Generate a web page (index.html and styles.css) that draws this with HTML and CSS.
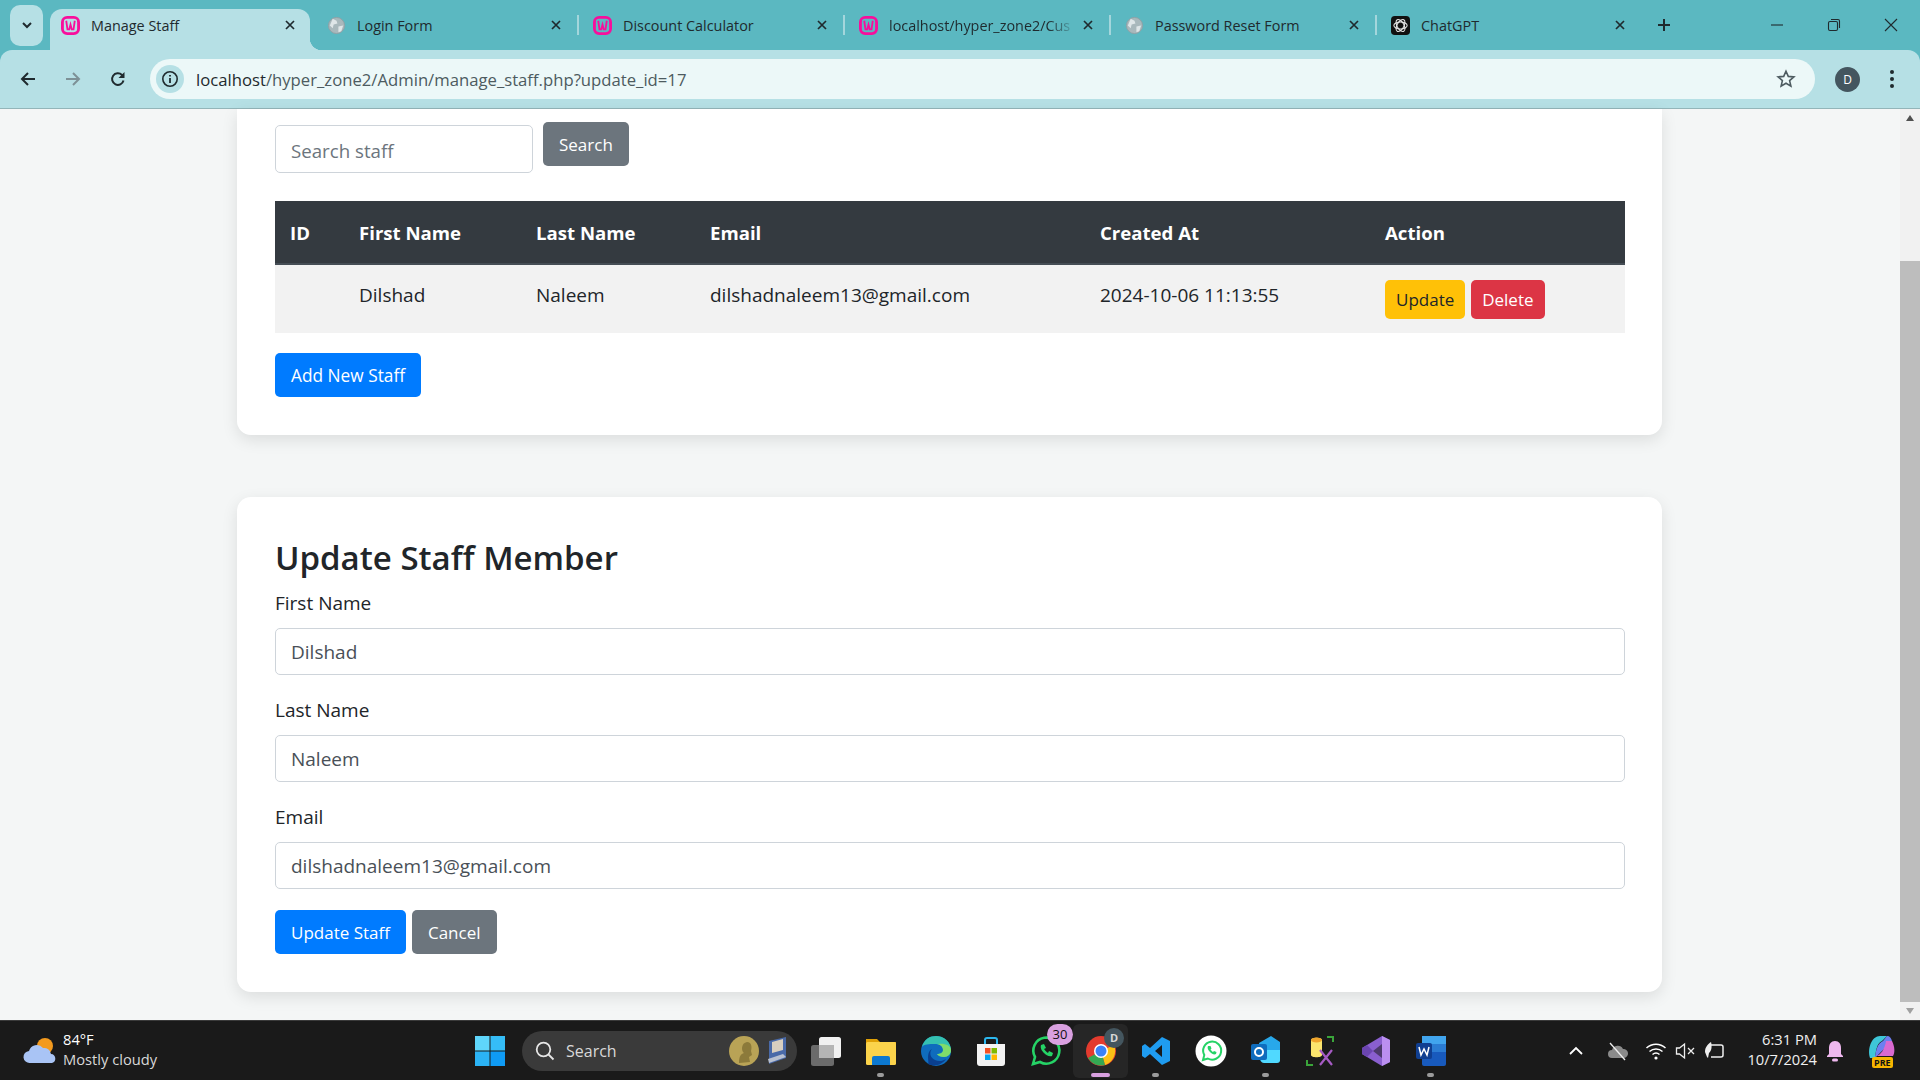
FILE: index.html
```html
<!DOCTYPE html>
<html lang="en">
<head>
    <meta charset="UTF-8">
    <title>Manage Staff</title>
    <link rel="stylesheet" href="styles.css">
</head>
<body>

<svg class="defs" width="0" height="0">
    <symbol id="wamp" viewBox="0 0 20 20">
        <rect x="1.500" y="1.500" width="17" height="17" rx="5" fill="none" stroke="#f80e9c" stroke-width="3"/>
        <path d="M5.500 5l1.300 9h1.900l1.300-5 1.300 5h1.900l1.300-9" fill="none" stroke="#f80e9c" stroke-width="1.900"/>
    </symbol>
    <symbol id="globe" viewBox="0 0 20 20">
        <circle cx="10" cy="10" r="8.500" fill="#a9b8bc" stroke="#8fa0a5"/>
        <path d="M6 3l4 2 1 3-4 1-1 4-3-3zM12 11l5-1-2 6-3 1z" fill="#dfe6e8"/>
    </symbol>
    <symbol id="close" viewBox="0 0 12 12">
        <path d="M2 2l8 8M10 2l-8 8" fill="none" stroke="#1f2a2e" stroke-width="1.700"/>
    </symbol>
</svg>

<div class="browser">
    <!-- Browser tabs -->
    <div class="tabstrip">
        <div class="tab-menu">
            <svg width="14" height="14" viewBox="0 0 14 14"><path d="M3 5l4 4 4-4" fill="none" stroke="#1f2a2e" stroke-width="2"/></svg>
        </div>
        <div class="tab active">
            <svg class="favicon"><use href="#wamp"/></svg>
            <span class="tab-title">Manage Staff</span>
            <svg class="tab-close"><use href="#close"/></svg>
        </div>
        <div class="tab">
            <svg class="favicon"><use href="#globe"/></svg>
            <span class="tab-title">Login Form</span>
            <svg class="tab-close"><use href="#close"/></svg>
        </div>
        <div class="tab">
            <svg class="favicon"><use href="#wamp"/></svg>
            <span class="tab-title">Discount Calculator</span>
            <svg class="tab-close"><use href="#close"/></svg>
        </div>
        <div class="tab">
            <svg class="favicon"><use href="#wamp"/></svg>
            <span class="tab-title fade">localhost/hyper_zone2/Cus</span>
            <svg class="tab-close"><use href="#close"/></svg>
        </div>
        <div class="tab">
            <svg class="favicon"><use href="#globe"/></svg>
            <span class="tab-title">Password Reset Form</span>
            <svg class="tab-close"><use href="#close"/></svg>
        </div>
        <div class="tab">
            <svg class="favicon" viewBox="0 0 20 20">
                <rect width="20" height="20" rx="4" fill="#111"/>
                <g fill="none" stroke="#e8e8e8" stroke-width="1.100">
                    <ellipse cx="10" cy="10" rx="7" ry="3.600"/>
                    <ellipse cx="10" cy="10" rx="7" ry="3.600" transform="rotate(60 10 10)"/>
                    <ellipse cx="10" cy="10" rx="7" ry="3.600" transform="rotate(120 10 10)"/>
                </g>
            </svg>
            <span class="tab-title">ChatGPT</span>
            <svg class="tab-close"><use href="#close"/></svg>
        </div>
        <svg class="new-tab" width="16" height="16" viewBox="0 0 16 16"><path d="M8 2v12M2 8h12" stroke="#1f2a2e" stroke-width="2"/></svg>
        <div class="window-controls">
            <svg width="16" height="16" viewBox="0 0 16 16"><path d="M2 8h12" stroke="#1f2a2e" stroke-width="1.100"/></svg>
            <svg width="16" height="16" viewBox="0 0 16 16"><rect x="2.500" y="4.500" width="9" height="9" rx="1.500" fill="none" stroke="#1f2a2e" stroke-width="1.100"/><path d="M5 2.500h7a1.500 1.500 0 0 1 1.500 1.500v7" fill="none" stroke="#1f2a2e" stroke-width="1.100"/></svg>
            <svg width="16" height="16" viewBox="0 0 16 16"><path d="M2 2l12 12M14 2L2 14" stroke="#1f2a2e" stroke-width="1.100"/></svg>
        </div>
    </div>

    <!-- Address bar -->
    <div class="toolbar">
        <svg class="nav-icon" viewBox="0 0 18 18"><path d="M16 9H3M9 3L3 9l6 6" fill="none" stroke="#1f2a2e" stroke-width="2"/></svg>
        <svg class="nav-icon" viewBox="0 0 18 18"><path d="M2 9h13M9 3l6 6-6 6" fill="none" stroke="#7d9196" stroke-width="2"/></svg>
        <svg class="nav-icon" viewBox="0 0 18 18"><path d="M14.500 10.500A5.800 5.800 0 1 1 13 5l1.500 1.500" fill="none" stroke="#1f2a2e" stroke-width="2"/><path d="M15.500 2v6h-6z" fill="#1f2a2e"/></svg>
        <div class="omnibox">
            <div class="site-info">
                <svg width="18" height="18" viewBox="0 0 18 18"><circle cx="9" cy="9" r="7.200" fill="none" stroke="#1f2a2e" stroke-width="1.600"/><path d="M9 8v5M9 5v1.600" stroke="#1f2a2e" stroke-width="1.800"/></svg>
            </div>
            <span class="url"><span class="url-host">localhost</span>/hyper_zone2/Admin/manage_staff.php?update_id=17</span>
            <svg class="star" width="20" height="20" viewBox="0 0 20 20"><path d="M10 2.200l2.300 5.200 5.600.5-4.300 3.700 1.300 5.500L10 14.200l-4.900 2.900 1.300-5.500-4.300-3.700 5.600-.5z" fill="none" stroke="#4d5b60" stroke-width="1.600"/></svg>
        </div>
        <div class="avatar">D</div>
        <svg class="kebab" width="6" height="20" viewBox="0 0 6 20"><circle cx="3" cy="3" r="2"/><circle cx="3" cy="10" r="2"/><circle cx="3" cy="17" r="2"/></svg>
    </div>
</div>

<div class="viewport">
    <main class="page">
        <section class="card staff-list">
            <form class="search-form">
                <input class="field search-field" type="text" placeholder="Search staff">
                <button class="btn btn-gray" type="button">Search</button>
            </form>

            <table class="staff-table">
                <colgroup>
                    <col class="col-id"><col class="col-first"><col class="col-last"><col class="col-email"><col class="col-created"><col>
                </colgroup>
                <thead>
                    <tr>
                        <th>ID</th>
                        <th>First Name</th>
                        <th>Last Name</th>
                        <th>Email</th>
                        <th>Created At</th>
                        <th>Action</th>
                    </tr>
                </thead>
                <tbody>
                    <tr>
                        <td></td>
                        <td>Dilshad</td>
                        <td>Naleem</td>
                        <td>dilshadnaleem13@gmail.com</td>
                        <td>2024-10-06 11:13:55</td>
                        <td class="actions">
                            <button class="btn btn-small btn-yellow" type="button">Update</button>
                            <button class="btn btn-small btn-red" type="button">Delete</button>
                        </td>
                    </tr>
                </tbody>
            </table>

            <button class="btn btn-blue add-btn" type="button">Add New Staff</button>
        </section>

        <section class="card staff-form">
            <h2>Update Staff Member</h2>
            <div class="form-group">
                <label>First Name</label>
                <input class="field" type="text" value="Dilshad">
            </div>
            <div class="form-group">
                <label>Last Name</label>
                <input class="field" type="text" value="Naleem">
            </div>
            <div class="form-group">
                <label>Email</label>
                <input class="field" type="text" value="dilshadnaleem13@gmail.com">
            </div>
            <div class="form-buttons">
                <button class="btn btn-blue" type="button">Update Staff</button>
                <button class="btn btn-gray" type="button">Cancel</button>
            </div>
        </section>
    </main>

    <div class="scrollbar">
        <div class="scroll-arrow"><svg width="10" height="8" viewBox="0 0 10 8"><path d="M5 1l4 6H1z" fill="#505050"/></svg></div>
        <div class="scroll-gap"></div>
        <div class="scroll-thumb"></div>
        <div class="scroll-arrow"><svg width="10" height="8" viewBox="0 0 10 8"><path d="M5 7L1 1h8z" fill="#a0a0a0"/></svg></div>
    </div>
</div>

<!-- Windows taskbar -->
<footer class="taskbar">
    <div class="weather">
        <svg width="36" height="32" viewBox="0 0 36 32">
            <circle cx="23" cy="11" r="8" fill="#f39a1e"/>
            <path d="M8 28a6 6 0 0 1-1-12 8 8 0 0 1 14-3 7 7 0 0 1 8 6 4.600 4.600 0 0 1 1 9z" fill="#a9c4f5"/>
        </svg>
        <div class="weather-text">
            <div class="temp">84°F</div>
            <div>Mostly cloudy</div>
        </div>
    </div>

    <div class="task-icons">
        <div class="task-icon">
            <svg width="30" height="30" viewBox="0 0 30 30">
                <rect x="0" y="0" width="14.500" height="14.500" fill="#5fd6fb"/>
                <rect x="15.500" y="0" width="14.500" height="14.500" fill="#35bdf7"/>
                <rect x="0" y="15.500" width="14.500" height="14.500" fill="#2bb3f5"/>
                <rect x="15.500" y="15.500" width="14.500" height="14.500" fill="#0f9bf5"/>
            </svg>
        </div>
        <div class="task-search">
            <svg width="22" height="22" viewBox="0 0 22 22"><circle cx="9.500" cy="9.500" r="6.800" fill="none" stroke="#e6e6e6" stroke-width="1.800"/><path d="M14.500 14.500l5 5" stroke="#e6e6e6" stroke-width="1.800"/></svg>
            <span class="task-search-label">Search</span>
            <svg class="medal" width="62" height="38" viewBox="0 0 62 38">
                <circle cx="17" cy="19" r="15" fill="#b9a356"/>
                <path d="M12 31c0-7 2-9 5-10-3-2-3-10 3-11 5 0 5 6 4 9l1 4-3 2 1 5z" fill="#8c7a3a"/>
                <path d="M42 9l17-4v21l-17 6z" fill="#4a6aa8"/>
                <path d="M45 10l11-3v11l-11 3z" fill="#d9cfc0"/>
                <path d="M41 27l15-5 3 3-17 6z" fill="#b8c0d0"/>
            </svg>
        </div>
        <div class="task-icon">
            <svg width="30" height="30" viewBox="0 0 30 30">
                <rect x="0" y="9" width="23" height="21" rx="2.500" fill="#6b6b6b"/>
                <rect x="8" y="1" width="22" height="21" rx="2.500" fill="#f1f1f1"/>
                <rect x="8" y="9" width="15" height="13" fill="#b5b5b5"/>
            </svg>
        </div>
        <div class="task-icon running">
            <svg width="32" height="30" viewBox="0 0 32 30">
                <path d="M1 3h11l3 3h16v8H1z" fill="#e0a106"/>
                <rect x="1" y="6" width="30" height="23" rx="1.500" fill="#fbd34b"/>
                <path d="M7 29v-7a2 2 0 0 1 2-2h14a2 2 0 0 1 2 2v7z" fill="#0c78d0"/>
            </svg>
        </div>
        <div class="task-icon">
            <svg width="32" height="32" viewBox="0 0 32 32">
                <circle cx="16" cy="16" r="15" fill="#0f6cbd"/>
                <path d="M2 12C4 4 10 1 16 1c8 0 15 6 15 14 0 4-3 7-7 7-3 0-6-1-7-3 3 0 6-1 6-4 0-4-4-6-8-6-6 0-11 0-13 3z" fill="#35c1b1"/>
                <path d="M31 15c0 4-3 7-7 7-3 0-6-1-7-3 3 0 6-1 6-4 0-3-2-5-5-6 6-1 13 1 13 6z" fill="#7fdc6a"/>
                <path d="M12 14c-3 3-2 9 3 11 4 2 8 1 11-1-4 6-12 8-18 5 2 0-3-11 4-15z" fill="#0a3f8f"/>
            </svg>
        </div>
        <div class="task-icon">
            <svg width="30" height="32" viewBox="0 0 30 32">
                <path d="M9 9V5a2 2 0 0 1 2-2h8a2 2 0 0 1 2 2v4" fill="none" stroke="#2cb7ee" stroke-width="2"/>
                <path d="M1 9h28v19a3 3 0 0 1-3 3H4a3 3 0 0 1-3-3z" fill="#f3f3f3"/>
                <rect x="9" y="13" width="5.500" height="5.500" fill="#f25022"/>
                <rect x="15.500" y="13" width="5.500" height="5.500" fill="#7fba00"/>
                <rect x="9" y="19.500" width="5.500" height="5.500" fill="#00a4ef"/>
                <rect x="15.500" y="19.500" width="5.500" height="5.500" fill="#ffb900"/>
            </svg>
        </div>
        <div class="task-icon">
            <svg width="32" height="32" viewBox="0 0 32 32">
                <path d="M3 29l2-7a13 13 0 1 1 5 5z" fill="none" stroke="#25d366" stroke-width="2.600"/>
                <path d="M11 10c-1 3 1 6 3 8s5 4 8 3l1-3-4-2-1 2c-2-1-3-3-4-4l2-1-2-4z" fill="#25d366"/>
            </svg>
            <span class="badge">30</span>
        </div>
        <div class="task-icon current">
            <svg width="30" height="30" viewBox="0 0 30 30">
                <circle cx="15" cy="15" r="15" fill="#e33b2e"/>
                <path d="M15 15l13-6a15 15 0 0 1-9 20z" fill="#fbc116"/>
                <path d="M15 15l4 14A15 15 0 0 1 2 22z" fill="#34a853"/>
                <circle cx="15" cy="15" r="7" fill="#fff"/>
                <circle cx="15" cy="15" r="5.500" fill="#3b82f6"/>
            </svg>
            <span class="chrome-badge">D</span>
        </div>
        <div class="task-icon running">
            <svg width="30" height="30" viewBox="0 0 30 30">
                <path d="M21 1l8 4v20l-8 4-12-11-5 4-3-2v-10l3-2 5 4zM21 9l-7 6 7 6z" fill="#1f9cf0"/>
            </svg>
        </div>
        <div class="task-icon">
            <svg width="32" height="32" viewBox="0 0 32 32">
                <circle cx="16" cy="16" r="15.500" fill="#fff"/>
                <path d="M8 25l1.300-5a9 9 0 1 1 3.500 3.500z" fill="none" stroke="#25d366" stroke-width="2"/>
                <path d="M13 11c-1 2 0 4 2 6s4 3 6 2l.5-2-2.500-1-1 1c-1-.5-2-2-2.500-2.500l1-1-1-2.500z" fill="#25d366"/>
            </svg>
        </div>
        <div class="task-icon running">
            <svg width="30" height="32" viewBox="0 0 30 32">
                <path d="M8 8l12-7 9 6v17a3 3 0 0 1-3 3H12a3 3 0 0 1-3-3z" fill="#28a8ea"/>
                <path d="M10 15h19v10a3 3 0 0 1-3 3H13a3 3 0 0 1-3-3z" fill="#50d9ff"/>
                <rect x="0" y="9" width="16" height="16" rx="2" fill="#0f6cbd"/>
                <circle cx="8" cy="17" r="4" fill="none" stroke="#fff" stroke-width="2"/>
            </svg>
        </div>
        <div class="task-icon">
            <svg width="30" height="32" viewBox="0 0 30 32">
                <path d="M5 5c0-3 11-3 11 0v15c0 3-11 3-11 0z" fill="#fbe56d"/>
                <ellipse cx="10.500" cy="5" rx="5.500" ry="2.500" fill="#f0a52c"/>
                <path d="M21 2h6v5M1 25v5h6" fill="none" stroke="#3aa53a" stroke-width="2"/>
                <path d="M14 30l12-15M26 30L14 15" stroke="#a65bc4" stroke-width="2.200"/>
            </svg>
        </div>
        <div class="task-icon">
            <svg width="28" height="32" viewBox="0 0 28 32">
                <path d="M20 1l8 4v22l-8 4-20-12v-6z" fill="#8a5fcf"/>
                <path d="M20 1l8 4v22l-8 4z" fill="#bb8ff0"/>
                <path d="M20 9l-9 7 9 7z" fill="#1b1b1b" opacity=".55"/>
                <path d="M0 13l5-3 6 6-6 6-5-3z" fill="#6b45b0"/>
            </svg>
        </div>
        <div class="task-icon running">
            <svg width="30" height="32" viewBox="0 0 30 32">
                <rect x="6" y="1" width="24" height="30" rx="2" fill="#185abd"/>
                <rect x="6" y="1" width="24" height="8" fill="#41a5ee"/>
                <rect x="6" y="9" width="24" height="8" fill="#2b7cd3"/>
                <rect x="0" y="8" width="16" height="16" rx="2" fill="#103f91"/>
                <path d="M3 12l2 8 3-6 3 6 2-8" fill="none" stroke="#fff" stroke-width="1.500"/>
            </svg>
        </div>
    </div>

    <div class="tray">
        <svg class="tray-chevron" width="16" height="16" viewBox="0 0 16 16"><path d="M2 11l6-6 6 6" fill="none" stroke="#fff" stroke-width="1.800"/></svg>
        <svg class="tray-cloud" width="22" height="20" viewBox="0 0 22 20"><path d="M5 17a4 4 0 0 1 0-8 6 6 0 0 1 11-1 4.500 4.500 0 0 1 1 9z" fill="#8b8b8b"/><path d="M3 2l15 17" stroke="#eee" stroke-width="1.300"/></svg>
        <svg class="tray-wifi" width="22" height="20" viewBox="0 0 22 20"><path d="M1.500 7a14 14 0 0 1 19 0M4.500 10.500a10 10 0 0 1 13 0M7.500 13.500a5.500 5.500 0 0 1 7 0" fill="none" stroke="#fff" stroke-width="1.500"/><circle cx="11" cy="17" r="1.600" fill="#fff"/></svg>
        <svg class="tray-sound" width="22" height="20" viewBox="0 0 22 20"><path d="M1.500 7v6h3l5 4V3l-5 4z" fill="none" stroke="#eee" stroke-width="1.300"/><path d="M13 7l6 6M19 7l-6 6" stroke="#eee" stroke-width="1.300"/></svg>
        <svg class="tray-battery" width="24" height="22" viewBox="0 0 24 22"><path d="M8 5h10a2 2 0 0 1 2 2v8a2 2 0 0 1-2 2H8" fill="none" stroke="#eee" stroke-width="1.500"/><path d="M2 12c0-5 3-8 6-10 1 3 1 9-2 11l-1 5-1-1z" fill="#eee"/></svg>
        <div class="clock">
            <div>6:31 PM</div>
            <div>10/7/2024</div>
        </div>
        <svg class="tray-bell" width="20" height="24" viewBox="0 0 20 24"><path d="M10 2c-4 0-6 3-6 7v6l-2 2v1h16v-1l-2-2V9c0-4-2-7-6-7z" fill="#efb8ef"/><rect x="7" y="19.500" width="6" height="3" rx="1.500" fill="#efb8ef"/></svg>
        <div class="copilot">
            <svg width="30" height="26" viewBox="0 0 30 26">
                <path d="M3 24C0 14 5 2 13 2h7l-5 5C9 10 9 18 8 24z" fill="#3ec6d8"/>
                <path d="M8 24c1-8 2-14 8-17l4-5c3 0 4 2 5 5z" fill="#6d7ff0"/>
                <path d="M25 7c3 6 3 12 1 15H8c6 0 10-8 11-15z" fill="#d96ad0"/>
            </svg>
            <span class="pre">PRE</span>
        </div>
    </div>
</footer>

</body>
</html>
```

FILE: styles.css
```css
* {
    margin: 0;
    padding: 0;
    box-sizing: border-box;
}
body {
    display: flex;
    flex-direction: column;
    height: 100vh;
    overflow: hidden;
    font-family: "Open Sans", "Noto Sans", sans-serif;
    font-size: 19px;
    color: #212529;
    background: #f4f6f6;
}
.defs {
    position: absolute;
}
.browser {
    flex: none;
    background: #5bb8c1;
}

/* Tabs */
.tabstrip {
    display: flex;
    align-items: center;
    height: 50px;
    padding-left: 10px;
    font-size: 14.4px;
    color: #1f2a2e;
}
.tab-menu {
    display: flex;
    align-items: center;
    justify-content: center;
    width: 33px;
    height: 41px;
    margin-right: 7px;
    border-radius: 10px;
    background: #b6e0e5;
}
.tab {
    display: flex;
    align-items: center;
    width: 266px;
    height: 50px;
    padding: 0 14px 0 17px;
    position: relative;
}
.tab + .tab::before {
    content: "";
    position: absolute;
    left: 1px;
    top: 15px;
    width: 2px;
    height: 20px;
    background: #a4d6dc;
}
.tab.active {
    width: 260px;
    height: 41px;
    margin-top: 9px;
    padding: 0 14px 9px 11px;
    background: #b6e0e5;
    border-radius: 12px 12px 0 0;
}
/* curved foot of the active tab */
.tab.active::after {
    content: "";
    position: absolute;
    right: -12px;
    bottom: 0;
    width: 12px;
    height: 12px;
    background: radial-gradient(circle at 100% 0, transparent 12px, #b6e0e5 12.5px);
}
.tab.active + .tab::before {
    display: none;
}
.favicon {
    flex: none;
    width: 19px;
    height: 19px;
    margin-right: 11px;
}
.tab-title {
    flex: 1;
    white-space: nowrap;
    overflow: hidden;
}
.tab-title.fade {
    -webkit-mask-image: linear-gradient(to right, #000 85%, transparent);
    mask-image: linear-gradient(to right, #000 85%, transparent);
}
.tab-close {
    flex: none;
    width: 12px;
    height: 12px;
    margin-left: 6px;
}
.new-tab {
    margin-left: 16px;
}
.window-controls {
    display: flex;
    margin-left: auto;
    gap: 41px;
    padding-right: 21px;
}

/* Address bar */
.toolbar {
    display: flex;
    align-items: center;
    height: 59px;
    padding: 0 15px 0 19px;
    background: #b6e0e5;
    border-bottom: 1px solid #93b5b9;
    border-radius: 12px 12px 0 0;
}
.nav-icon {
    flex: none;
    width: 18px;
    height: 18px;
    margin-right: 27px;
}
.omnibox {
    display: flex;
    align-items: center;
    width: 1665px;
    height: 40px;
    margin-left: -4px;
    padding: 0 19px 0 6px;
    border-radius: 20px;
    background: #ecf8f8;
    font-size: 16.7px;
    color: #4d5b60;
}
.site-info {
    display: flex;
    align-items: center;
    justify-content: center;
    width: 28px;
    height: 28px;
    margin-right: 12px;
    border-radius: 50%;
    background: #b6e0e5;
}
.url-host {
    color: #1f2a2e;
}
.star {
    margin-left: auto;
}
.avatar {
    flex: none;
    width: 25px;
    height: 25px;
    margin-left: 20px;
    border-radius: 50%;
    background: #44565f;
    color: #fff;
    font-size: 12px;
    line-height: 25px;
    text-align: center;
}
.kebab {
    flex: none;
    margin-left: 29px;
    fill: #1f2a2e;
}

/* Page area */
.viewport {
    display: flex;
    flex: 1;
    min-height: 0;
}
.page {
    flex: 1;
    padding-left: 237px;
}
.card {
    width: 1425px;
    padding: 0 37px 38px 38px;
    background: white;
    border-radius: 0 0 14px 14px;
    box-shadow: 0 5px 16px rgba(0, 0, 0, 0.1);
}
.staff-list {
    padding-top: 13px;
}
.staff-form {
    margin-top: 62px;
    padding-top: 38px;
    border-radius: 14px;
}
.search-form {
    display: flex;
    align-items: flex-start;
}
.field {
    display: block;
    width: 100%;
    height: 47px;
    padding: 0 15px;
    border: 1px solid #ced4da;
    border-radius: 5px;
    font: inherit;
    color: #495057;
    background: white;
}
.field::placeholder {
    color: #6c757d;
}
.search-field {
    width: 258px;
    height: 48px;
    margin: 3px 10px 0 0;
    padding-top: 2px;
    font-size: 18.7px;
}
.btn {
    height: 44px;
    padding: 0 15px;
    border: 1px solid transparent;
    border-radius: 5px;
    font: inherit;
    font-size: 17px;
    color: white;
    cursor: pointer;
}
.add-btn {
    font-size: 17.3px;
}
.btn-small {
    height: 39px;
    padding: 0 10px;
}
.btn-gray {
    background: #6c757d;
}
.btn-blue {
    background: #007bff;
}
.btn-yellow {
    background: #ffc107;
    color: #212529;
}
.btn-red {
    margin-left: 1px;
    background: #dc3545;
}

/* Staff table */
.staff-table {
    width: 100%;
    margin-top: 28px;
    border-collapse: collapse;
    table-layout: fixed;
    font-size: 19px;
}
.col-id {
    width: 69px;
}
.col-first {
    width: 177px;
}
.col-last {
    width: 174px;
}
.col-email {
    width: 390px;
}
.col-created {
    width: 285px;
}
.staff-table th {
    height: 63px;
    padding: 0 15px;
    background: #343a40;
    border-bottom: 2px solid #454d55;
    color: white;
    text-align: left;
    font-size: 18.6px;
    font-weight: 700;
}
.staff-table td {
    height: 69px;
    padding: 0 15px 8px;
    background: #f2f2f2;
    vertical-align: middle;
}
.staff-table td.actions {
    padding: 0 15px;
}
.add-btn {
    display: block;
    margin-top: 20px;
}

/* Update form */
h2 {
    height: 45px;
    margin-bottom: 9px;
    font-size: 33px;
    line-height: 45px;
    font-weight: 600;
}
label {
    display: block;
    height: 29px;
    margin-bottom: 10px;
    line-height: 29px;
}
.form-group {
    margin-bottom: 21px;
}
.form-group:last-of-type {
    margin-bottom: 19px;
}
.form-buttons {
    display: flex;
    gap: 6px;
}

/* Scrollbar */
.scrollbar {
    display: flex;
    flex-direction: column;
    width: 20px;
    background: #f1f1f1;
}
.scroll-arrow {
    display: flex;
    flex: none;
    align-items: center;
    justify-content: center;
    height: 18px;
}
.scroll-gap {
    flex: none;
    height: 134px;
}
.scroll-thumb {
    flex: 1;
    background: #bdbdbd;
}

/* Taskbar */
.taskbar {
    display: flex;
    align-items: center;
    flex: none;
    height: 60px;
    background: #1a1a1a;
    border-top: 1px solid #3a3a3a;
    color: white;
    font-size: 14.7px;
}
.weather {
    display: flex;
    align-items: center;
    flex: none;
    width: 462px;
    padding-left: 22px;
    gap: 5px;
}
.weather-text {
    padding-bottom: 3px;
    line-height: 20px;
    color: #d8d8d8;
}
.temp {
    color: white;
}
.task-icons {
    display: flex;
    align-items: center;
}
.task-icon {
    display: flex;
    align-items: center;
    justify-content: center;
    flex: none;
    width: 55px;
    height: 54px;
    position: relative;
}
.task-icon.running::after,
.task-icon.current::after {
    content: "";
    position: absolute;
    bottom: 1px;
    left: 24px;
    width: 7px;
    height: 4px;
    border-radius: 2px;
    background: #9b9b9b;
}
.task-icon.current {
    border-radius: 6px;
    background: #262626;
}
.task-icon.current::after {
    left: 18px;
    width: 19px;
    background: #d9a0e0;
}
.task-search {
    display: flex;
    align-items: center;
    width: 275px;
    height: 40px;
    margin: 0 1px 0 5px;
    padding: 0 8px 0 12px;
    border-radius: 20px;
    background: #3a3a3a;
    color: #d8d8d8;
    font-size: 16px;
}
.task-search-label {
    margin-left: 10px;
}
.medal {
    margin-left: auto;
}
.badge {
    position: absolute;
    top: 0;
    right: 0;
    min-width: 26px;
    height: 21px;
    border-radius: 11px;
    background: #d9a0e0;
    color: #111;
    font-size: 13px;
    line-height: 21px;
    text-align: center;
}
.chrome-badge {
    position: absolute;
    top: 4px;
    right: 4px;
    width: 20px;
    height: 20px;
    border-radius: 50%;
    background: #44565f;
    color: #d8d8d8;
    font-size: 11px;
    font-weight: 700;
    line-height: 20px;
    text-align: center;
}
.tray {
    display: flex;
    align-items: center;
    flex: 1;
    min-width: 0;
    position: relative;
    padding-left: 110px;
}
.tray-chevron {
    margin-right: 23px;
}
.tray-cloud {
    margin-right: 16px;
}
.tray-wifi {
    margin-right: 8px;
}
.tray-sound {
    margin-right: 6px;
}
.clock {
    width: 90px;
    margin-right: 8px;
    padding-bottom: 3px;
    line-height: 20px;
    text-align: right;
    white-space: nowrap;
    color: #f0f0f0;
}
.tray-bell {
    margin-right: 22px;
}
.copilot {
    position: relative;
    width: 30px;
    height: 34px;
}
.pre {
    position: absolute;
    left: 5px;
    bottom: 0;
    padding: 0 2px;
    border-radius: 2px;
    background: #f7b500;
    color: #111;
    font-size: 9px;
    font-weight: 700;
    line-height: 11px;
}
```
